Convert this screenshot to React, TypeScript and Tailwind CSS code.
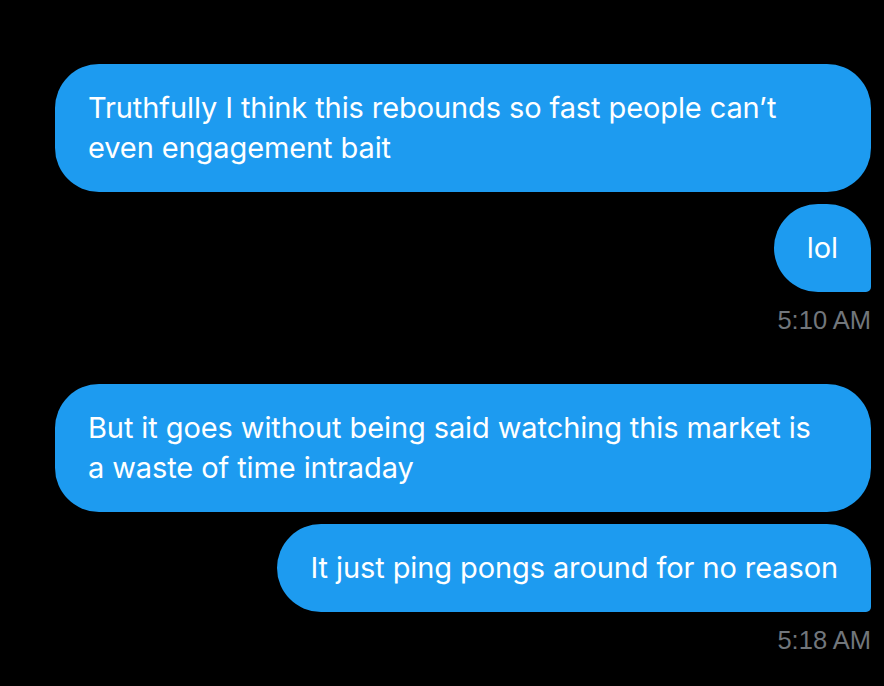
import React from "react";

function Bubble({ text, tail }: { text: string; tail?: boolean }) {
  return (
    <div
      className={`max-w-full bg-[#1d9bf0] px-[33px] py-[24px] text-[29px] leading-[40px] tracking-[-0.1px] text-white ${
        tail ? "rounded-[44px] rounded-br-[5px]" : "rounded-[44px]"
      }`}
      style={{ fontFamily: "Inter, sans-serif" }}
    >
      {text}
    </div>
  );
}

export default function App() {
  return (
    <div className="min-h-[686px] w-[884px] bg-black pl-[55px] pr-[13px] pt-[64px]">
      <div className="flex flex-col items-end">
        <Bubble text="Truthfully I think this rebounds so fast people can’t even engagement bait" />
        <div className="mt-[12px]">
          <Bubble text="lol" tail />
        </div>
        <div className="mt-[12px] text-[25.5px] leading-[32px] text-[#71767b] font-['Liberation_Sans',sans-serif]">5:10 AM</div>
        <div className="mt-[48px]">
          <Bubble text={"But it goes without being said watching this market is a\u00A0waste of time intraday"} />
        </div>
        <div className="mt-[12px]">
          <Bubble text="It just ping pongs around for no reason" tail />
        </div>
        <div className="mt-[12px] text-[25.5px] leading-[32px] text-[#71767b] font-['Liberation_Sans',sans-serif]">5:18 AM</div>
      </div>
    </div>
  );
}
